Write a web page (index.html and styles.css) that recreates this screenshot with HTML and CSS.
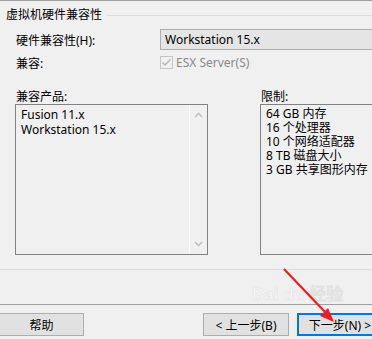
FILE: index.html
```html
<!DOCTYPE html>
<html lang="zh-CN">
<head>
<meta charset="utf-8">
<title>虚拟机硬件兼容性</title>
<link rel="stylesheet" href="styles.css">
</head>
<body>
<div class="page">
  <div class="group-head">
    <span class="group-title">虚拟机硬件兼容性</span>
    <span class="group-line"></span>
  </div>

  <div class="form-row row-hw">
    <span class="label">硬件兼容性(H):</span>
    <div class="combo">Workstation 15.x</div>
  </div>

  <div class="form-row row-compat">
    <span class="label">兼容:</span>
    <div class="check-wrap">
      <span class="checkbox">
        <svg width="11" height="11" viewBox="0 0 11 11"><path d="M1.5 5.5 L4 8 L9.5 2.5" fill="none" stroke="#b4b4b4" stroke-width="1.4"/></svg>
      </span>
      <span class="check-text">ESX Server(S)</span>
    </div>
  </div>

  <div class="panels">
    <div class="panel panel-left">
      <div class="panel-label">兼容产品:</div>
      <div class="listbox">
        <div class="list-items">
          <div>Fusion 11.x</div>
          <div>Workstation 15.x</div>
        </div>
        <div class="scrollbar">
          <svg width="9" height="6" viewBox="0 0 9 6"><path d="M1 5 L4.5 1.5 L8 5" fill="none" stroke="#c2c2c2" stroke-width="1.6"/></svg>
          <svg width="9" height="6" viewBox="0 0 9 6"><path d="M1 1 L4.5 4.5 L8 1" fill="none" stroke="#c2c2c2" stroke-width="1.6"/></svg>
        </div>
      </div>
    </div>
    <div class="panel panel-right">
      <div class="panel-label">限制:</div>
      <div class="limits">
        <div>64 GB 内存</div>
        <div>16 个处理器</div>
        <div>10 个网络适配器</div>
        <div>8 TB 磁盘大小</div>
        <div>3 GB 共享图形内存</div>
      </div>
    </div>
  </div>

  <div class="sep-light"></div>
  <div class="sep-dark"></div>

  <div class="buttons">
    <button class="btn btn-help">帮助</button>
    <span class="spacer"></span>
    <button class="btn btn-back">&lt; 上一步(B)</button>
    <button class="btn btn-next">下一步(N) &gt;</button>
  </div>

  <span class="watermark">Bai du 经验</span>
  <svg class="arrow" width="372" height="339" viewBox="0 0 372 339">
    <line x1="284" y1="269" x2="326" y2="313" stroke="#ee1c24" stroke-width="2.2"/>
    <polygon points="334,322 320,316 328,308" fill="#ee1c24"/>
  </svg>
</div>
</body>
</html>
```
FILE: styles.css
```css
html, body {
  margin: 0;
  padding: 0;
  background: #f0f0f0;
}
body {
  width: 372px;
  height: 339px;
  overflow: hidden;
  font-family: "Noto Sans", "Noto Sans CJK SC", sans-serif;
  font-size: 12px;
  color: #000;
}
.page {
  position: relative;
  width: 372px;
  height: 339px;
  border-top: 1px solid #a0a0a0;
  box-sizing: border-box;
  display: flex;
  flex-direction: column;
}
.group-head {
  display: flex;
  align-items: center;
  margin-top: 7px;
  height: 14px;
  padding-left: 6px;
}
.group-title {
  line-height: 14px;
  white-space: nowrap;
  padding-right: 5px;
}
.group-line {
  flex: 1;
  height: 1px;
  background: #dcdcdc;
}
.form-row {
  display: flex;
  align-items: center;
  padding-left: 16px;
}
.label {
  width: 144px;
  flex: none;
  white-space: nowrap;
}
.row-hw {
  margin-top: 7px;
  height: 21px;
}
.combo {
  flex: none;
  width: 230px;
  height: 21px;
  box-sizing: border-box;
  border: 1px solid #adadad;
  background: #e5e5e5;
  padding-left: 4px;
  line-height: 19px;
  white-space: nowrap;
}
.row-compat {
  margin-top: 6px;
  height: 13px;
}
.check-wrap {
  display: flex;
  align-items: center;
}
.checkbox {
  width: 13px;
  height: 13px;
  box-sizing: border-box;
  border: 1px solid #c6c6c6;
  background: #f0f0f0;
  display: flex;
  align-items: center;
  justify-content: center;
}
.check-text {
  margin-left: 3px;
  color: #8a8a8a;
  white-space: nowrap;
}
.panels {
  display: flex;
  margin-top: 21px;
  padding-left: 15px;
  gap: 52px;
}
.panel-label {
  height: 14px;
  line-height: 14px;
  padding-left: 1px;
  white-space: nowrap;
}
.panel-left {
  width: 193px;
  flex: none;
}
.panel-right {
  flex: none;
  width: 120px;
}
.listbox, .limits {
  margin-top: 0;
  height: 151px;
  box-sizing: border-box;
  border: 1px solid #828282;
  background: #f0f0f0;
}
.listbox {
  display: flex;
}
.list-items {
  flex: 1;
  padding: 2px 0 0 5px;
  line-height: 15px;
  white-space: nowrap;
}
.scrollbar {
  width: 17px;
  flex: none;
  border-left: 1px solid #fbfbfb;
  display: flex;
  flex-direction: column;
  justify-content: space-between;
  align-items: center;
  padding: 7px 0 7px;
}
.limits {
  width: 120px;
  border-right: none;
  padding: 2px 0 0 5px;
  line-height: 14px;
  white-space: nowrap;
}
.sep-light {
  margin-top: 14px;
  height: 1px;
  background: #dcdcdc;
}
.sep-dark {
  margin-top: 34px;
  height: 1px;
  background: #a0a0a0;
}
.buttons {
  display: flex;
  margin-top: 8px;
  height: 23px;
}
.spacer {
  flex: 1;
}
.btn {
  font-family: "Noto Sans", "Noto Sans CJK SC", sans-serif;
  font-size: 12px;
  color: #000;
  background: #e1e1e1;
  border: 1px solid #adadad;
  height: 23px;
  box-sizing: border-box;
  padding: 0;
  margin: 0;
  white-space: nowrap;
  flex: none;
}
.btn-help {
  width: 85px;
  margin-left: -1px;
}
.btn-back {
  width: 86px;
}
.btn-next {
  width: 86px;
  margin-left: 8px;
  margin-right: -11px;
  border: 2px solid #0078d7;
}
.watermark {
  position: absolute;
  left: 252px;
  top: 279px;
  font-family: "Liberation Sans", sans-serif;
  font-weight: bold;
  font-size: 17px;
  color: rgba(255, 255, 255, 0.4);
  -webkit-text-stroke: 0.5px #e2e2e2;
  pointer-events: none;
}
.arrow {
  position: absolute;
  left: 0;
  top: -1px;
  pointer-events: none;
}
```
